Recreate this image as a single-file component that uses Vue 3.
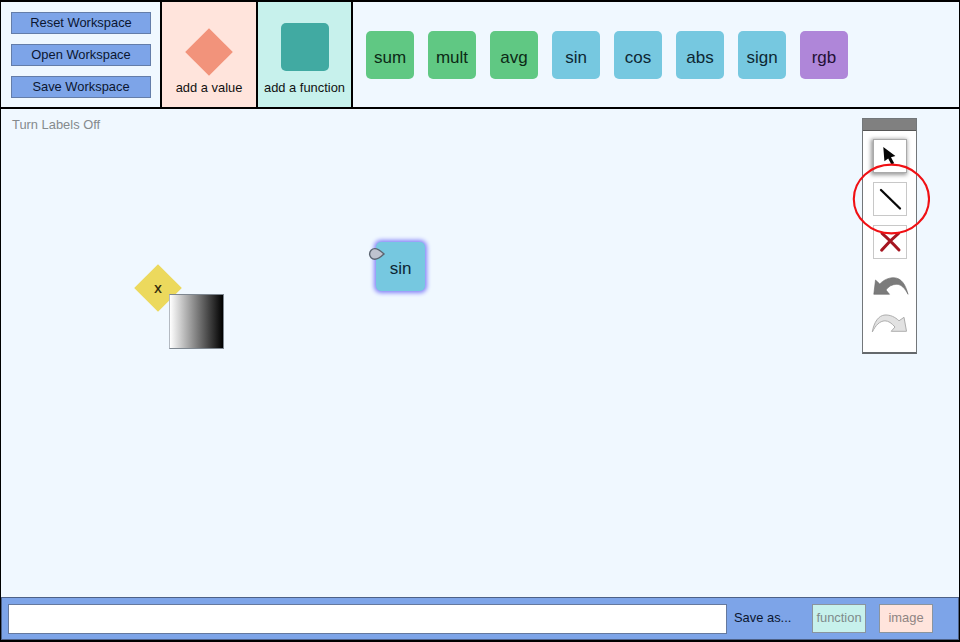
<script setup>
const actions = ['Reset Workspace', 'Open Workspace', 'Save Workspace']
const functions = [
  { name: 'sum', kind: 'green' },
  { name: 'mult', kind: 'green' },
  { name: 'avg', kind: 'green' },
  { name: 'sin', kind: 'blue' },
  { name: 'cos', kind: 'blue' },
  { name: 'abs', kind: 'blue' },
  { name: 'sign', kind: 'blue' },
  { name: 'rgb', kind: 'purple' },
]
</script>

<template>
  <div class="app">
    <header class="topbar">
      <div class="actions">
        <button v-for="a in actions" :key="a" class="action">{{ a }}</button>
      </div>
      <div class="adder value">
        <svg class="shape" width="48" height="48" viewBox="0 0 48 48"><path d="M24 .2 47.8 24 24 47.8 .2 24Z" fill="#f2937b" /></svg>
        <span>add a value</span>
      </div>
      <div class="adder func">
        <div class="square"></div>
        <span>add a function</span>
      </div>
      <div class="palette">
        <div v-for="f in functions" :key="f.name" class="tile" :class="f.kind">{{ f.name }}</div>
      </div>
    </header>

    <main class="canvas">
      <span class="labels">Turn Labels Off</span>

      <div class="node-x">
        <svg width="48" height="48" viewBox="0 0 48 48"><path d="M24 .2 47.8 24 24 47.8 .2 24Z" fill="#ecd95d" /></svg>
        <span>x</span>
      </div>
      <div class="preview"></div>

      <div class="node-sin tile blue">sin</div>
      <svg class="inlet" width="18" height="14" viewBox="0 0 18 14">
        <path d="M16 7C13 4.2 10.3 1.6 6.8 1.6A5.2 5.3 0 0 0 6.8 12.2C10.3 12.2 13 9.8 16 7Z" fill="#bfc3cf" stroke="#5b6470" stroke-width="1.4" />
      </svg>

      <aside class="tools">
        <div class="grip"></div>
        <div class="tool selected">
          <svg width="32" height="32" viewBox="0 0 32 32"><path d="M9.3 7 21.4 16 17 17.2 20.2 23.2 17.4 24.6 14.2 18.4 10.4 21.2Z" fill="#050505" /></svg>
        </div>
        <div class="tool">
          <svg width="32" height="32" viewBox="0 0 32 32"><path d="M7 7 26 25.5" stroke="#080808" stroke-width="2.3" stroke-linecap="round" /></svg>
        </div>
        <div class="tool">
          <svg width="32" height="32" viewBox="0 0 32 32"><path d="M8 7.4Q15.6 14 25 24M24.6 7.4Q15.5 15 7.6 24.2" fill="none" stroke="#a51520" stroke-width="3" stroke-linecap="round" /></svg>
        </div>
        <svg class="undo" width="38" height="24" viewBox="0 0 38 24">
          <path d="M4.5 4 8.8 8C12.5 4 17.5 1.7 22.8 1.7C30.5 2 34.5 8.5 37 18.3C34 12.5 30.5 8.6 26 8.3C21 8.3 17.2 10.6 15 14L18.5 18.3H2.8Z" fill="#7b7b7b" stroke="#686868" stroke-width=".6" />
        </svg>
        <svg class="redo" width="38" height="24" viewBox="0 0 38 24">
          <path d="M1.3 19C3 9 7.6 2.4 14 2C19.5 1.8 24 4 28 7.8L33 4.3 35.5 18.3H20.2L24 14C20.5 10 17.6 8 14 7.8C8.5 8 4.5 12.5 1.3 19Z" fill="#e2e2e2" stroke="#adadad" stroke-width="1" />
        </svg>
      </aside>
      <svg class="ring" width="78" height="72" viewBox="0 0 78 72"><ellipse cx="39.4" cy="36" rx="37.6" ry="34.4" fill="none" stroke="#f01014" stroke-width="2.1" /></svg>
    </main>

    <footer class="bottombar">
      <div class="field"></div>
      <span class="save-as">Save as...</span>
      <button class="save function">function</button>
      <button class="save image">image</button>
    </footer>
  </div>
</template>

<style>
body { background: #000; overflow: hidden; }
</style>

<style scoped>
* { box-sizing: border-box; }
.app {
  width: 960px;
  height: 642px;
  display: flex;
  flex-direction: column;
  border: solid #000;
  border-width: 2px 1px 2px 1px;
  background: #f0f8ff;
  color: #111;
  font: 12.9px/16px "Liberation Sans", Arial, sans-serif;
}
button { font: inherit; padding: 0; margin: 0; border-radius: 0; display: block; }
.topbar { height: 107px; flex: none; display: flex; border-bottom: 2px solid #000; }
.actions { width: 159px; padding: 10px 0 0 10px; display: flex; flex-direction: column; gap: 10px; }
.action { width: 140px; height: 22px; line-height: 20px; background: #7da4e8; border: 1px solid #647da9; color: #0b1630; }
.adder { width: 96px; border-left: 2px solid #000; display: flex; flex-direction: column; align-items: center; white-space: nowrap; }
.adder span { margin-top: 7px; }
.value { background: #ffe4dc; }
.func { width: 97px; border-right: 2px solid #000; background: #c7f1ec; }
.shape { margin-top: 26px; margin-bottom: -3px; }
.square { width: 48px; height: 48px; margin-top: 21px; margin-bottom: 2px; border-radius: 5px; background: #41aaa2; }
.palette { display: flex; gap: 14px; padding: 29px 0 0 13px; }
.tile { width: 48px; height: 48px; border-radius: 5px; display: flex; align-items: center; justify-content: center; padding-top: 5px; font-size: 17px; line-height: 20px; }
.green { background: #60c883; color: #0c2a16; }
.blue { background: #76c8e0; color: #0d2733; }
.purple { background: #af86d9; color: #231035; }
.canvas { flex: 1; position: relative; padding: 8px 11px; }
.labels { color: #858a8d; }
.node-x { position: absolute; left: 133px; top: 155px; width: 48px; height: 48px; }
.node-x span { position: absolute; inset: 16px 0 auto 0; text-align: center; font-size: 15px; color: #282206; -webkit-text-stroke: .2px #282206; }
.preview { position: absolute; left: 168px; top: 185px; width: 55px; height: 55px; border: 1px solid #7e8790; border-left-color: #b4bac2; background: linear-gradient(to right, #fff, #000); }
.node-sin { position: absolute; left: 375px; top: 133px; width: 49px; height: 49px; padding-top: 5px; box-shadow: 0 0 4px 2px #8583f8; }
.inlet { position: absolute; left: 367px; top: 137.5px; }
.tools { position: absolute; left: 861px; top: 9px; width: 55px; height: 236px; background: #fff; border: 1px solid #73777a; border-bottom: 2px solid #65696c; display: flex; flex-direction: column; align-items: center; }
.grip { width: 100%; height: 12px; flex: none; background: #808080; border-bottom: 1px solid #555; margin-bottom: 8px; }
.tool { width: 34px; height: 34px; flex: none; margin-bottom: 9px; border: 1px solid #c8c8c8; background: #fff; }
.tool svg { display: block; }
.selected { box-shadow: -1px 1px 4px 1px #999; border-color: #aaa; }
.undo { margin-top: 8px; flex: none; }
.redo { margin-top: 13px; flex: none; }
.ring { position: absolute; left: 851px; top: 54px; }
.bottombar { height: 43px; flex: none; display: flex; align-items: center; border: 1px solid #4d6187; background: #7da4e8; }
.field { width: 719px; height: 30px; margin-left: 6px; background: #fff; border: 1px solid #65799e; }
.save-as { width: 78px; margin-left: 7px; margin-top: -2px; color: #0b1630; }
.save { width: 54px; height: 29px; line-height: 25px; padding-bottom: 2px; border: 1px solid #8a949e; color: #7e8b8b; }
.function { background: #c7f1ec; }
.image { background: #ffe4dc; margin-left: 13px; color: #8f8583; }
</style>
